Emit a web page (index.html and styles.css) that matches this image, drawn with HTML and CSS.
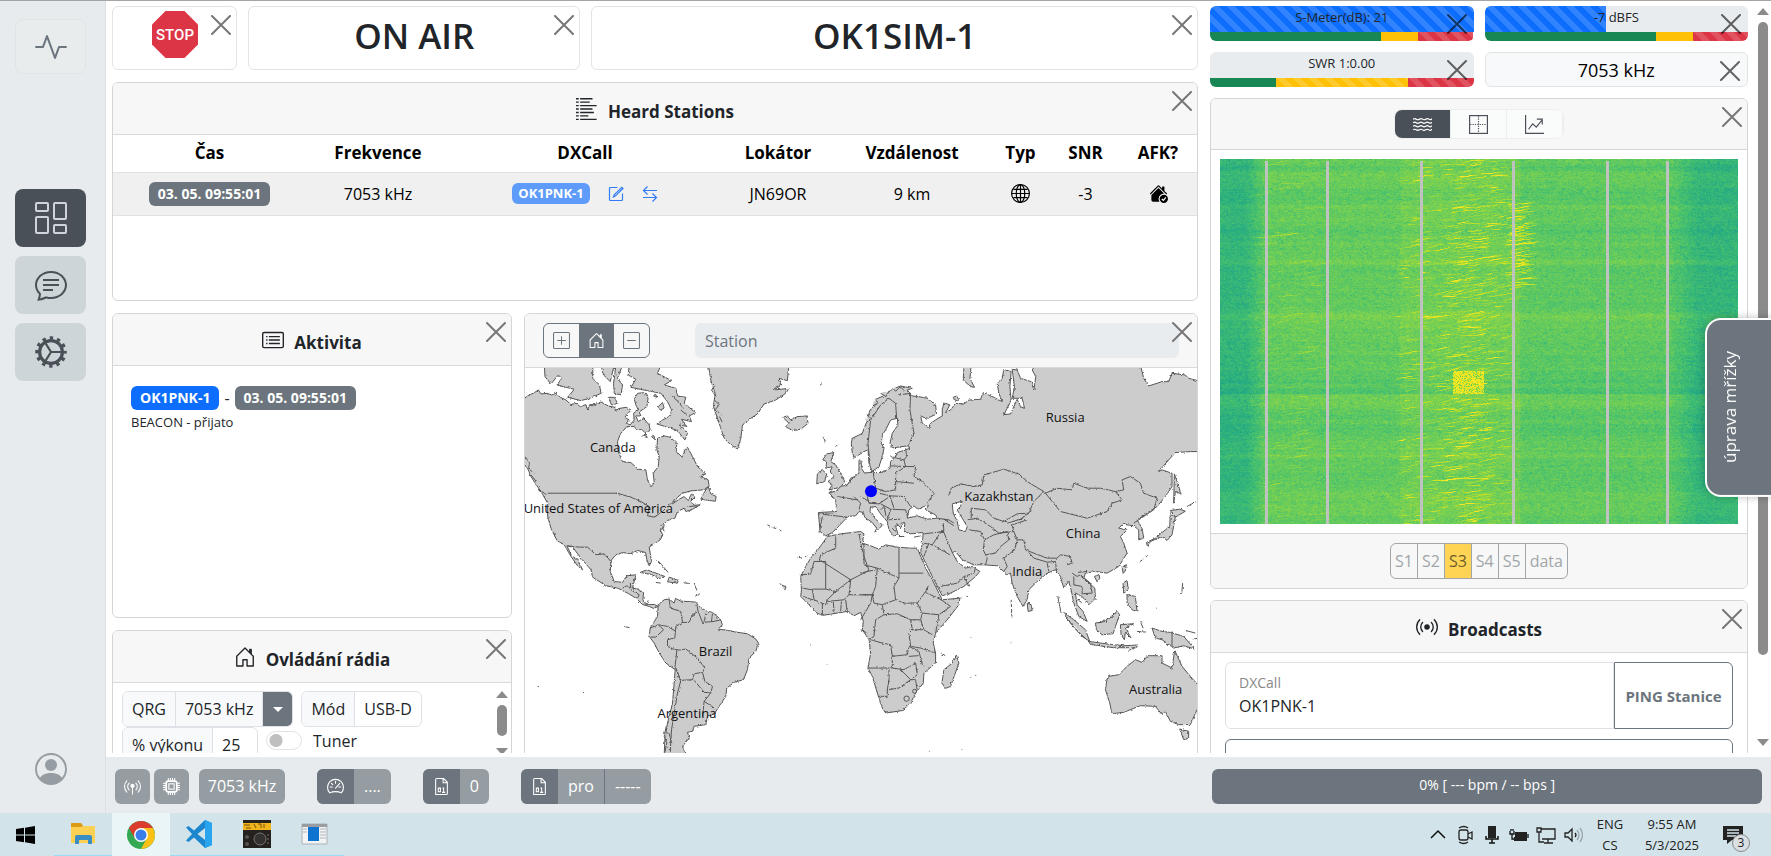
FILE: index.html
```html
<!DOCTYPE html>
<html lang="cs">
  <head>
    <meta charset="UTF-8" />
    <meta name="viewport" content="width=device-width, initial-scale=1.0" />
    <title>FreeDATA</title>
    <link rel="stylesheet" href="styles.css">
  </head>
  <body>
    <!-- icon sprite -->
    <svg class="sprite" aria-hidden="true">
      <symbol id="i-close" viewBox="0 0 20 20"><path d="M1 1l18 18M19 1L1 19" fill="none" stroke="currentColor" stroke-width="2" stroke-linecap="round"/></symbol>
      <symbol id="i-activity" viewBox="0 0 16 16"><path d="M6 2a.5.5 0 0 1 .47.33L10 12.036l1.53-4.208A.5.5 0 0 1 12 7.5h3.5a.5.5 0 0 1 0 1h-3.15l-1.88 5.17a.5.5 0 0 1-.94 0L6 3.964 4.47 8.171A.5.5 0 0 1 4 8.5H.5a.5.5 0 0 1 0-1h3.15l1.88-5.17A.5.5 0 0 1 6 2"/></symbol>
      <symbol id="i-grid" viewBox="0 0 16 16"><path d="M6 1v3H1V1zM1 0a1 1 0 0 0-1 1v3a1 1 0 0 0 1 1h5a1 1 0 0 0 1-1V1a1 1 0 0 0-1-1zm14 12v3h-5v-3zm-5-1a1 1 0 0 0-1 1v3a1 1 0 0 0 1 1h5a1 1 0 0 0 1-1v-3a1 1 0 0 0-1-1zM6 8v7H1V8zM1 7a1 1 0 0 0-1 1v7a1 1 0 0 0 1 1h5a1 1 0 0 0 1-1V8a1 1 0 0 0-1-1zm14-6v7h-5V1zm-5-1a1 1 0 0 0-1 1v7a1 1 0 0 0 1 1h5a1 1 0 0 0 1-1V1a1 1 0 0 0-1-1z"/></symbol>
      <symbol id="i-chat" viewBox="0 0 16 16"><path d="M2.678 11.894a1 1 0 0 1 .287.801 11 11 0 0 1-.398 2c1.395-.323 2.247-.697 2.634-.893a1 1 0 0 1 .71-.074A8 8 0 0 0 8 14c3.996 0 7-2.807 7-6s-3.004-6-7-6-7 2.808-7 6c0 1.468.617 2.83 1.678 3.894m-.493 3.905a22 22 0 0 1-.713.129c-.2.032-.352-.176-.273-.362a10 10 0 0 0 .244-.637l.003-.01c.248-.72.45-1.548.524-2.319C.743 11.37 0 9.76 0 8c0-3.866 3.582-7 8-7s8 3.134 8 7-3.582 7-8 7a9 9 0 0 1-2.347-.306c-.52.263-1.639.742-3.468 1.105"/><path d="M4 5.5h8M4 8h8M4 10.500h5" stroke="currentColor"/></symbol>
      <symbol id="i-gear" viewBox="0 0 16 16"><g fill="none" stroke="currentColor"><circle cx="8" cy="8" r="5.700" stroke-width="1.600"/><circle cx="8" cy="8" r="7" stroke-width="1.700" stroke-dasharray="1.700 1.965" stroke-dashoffset=".85"/><path d="M8 8h5.500M8 8L5 3.200M8 8l-3 4.800" stroke-width="1.100"/></g></symbol>
      <symbol id="i-person" viewBox="0 0 16 16"><path d="M11 6a3 3 0 1 1-6 0 3 3 0 0 1 6 0"/><path fill-rule="evenodd" d="M0 8a8 8 0 1 1 16 0A8 8 0 0 1 0 8m8-7a7 7 0 0 0-5.468 11.37C3.242 11.226 4.805 10 8 10s4.757 1.225 5.468 2.37A7 7 0 0 0 8 1"/></symbol>
      <symbol id="i-house" viewBox="0 0 16 16"><path d="M8.354 1.146a.5.5 0 0 0-.708 0l-6 6A.5.5 0 0 0 1.500 7.500v7a.5.5 0 0 0 .5.5h4.500a.5.5 0 0 0 .5-.5v-4h2v4a.5.5 0 0 0 .5.5H14a.5.5 0 0 0 .5-.5v-7a.5.5 0 0 0-.146-.354L13 5.793V2.500a.5.5 0 0 0-.5-.5h-1a.5.5 0 0 0-.5.5v1.293zM2.500 14V7.707l5.500-5.500 5.500 5.500V14H10v-4a.5.5 0 0 0-.5-.5h-3a.5.5 0 0 0-.5.5v4z"/></symbol>
      <symbol id="i-list" viewBox="0 0 16 16"><path d="M0 .5h2M3 .5h9M0 3h2M3 3h7M0 5.500h2M3 5.500h12M0 8h2M3 8h9M0 10.500h2M3 10.500h10M0 13h2M3 13h6M0 15.500h2M3 15.500h12" fill="none" stroke="currentColor"/></symbol>
      <symbol id="i-card" viewBox="0 0 16 16"><g fill="none" stroke="currentColor"><rect x=".5" y="2.500" width="15" height="11" rx="1"/><path d="M5 5.500h8M5 8h8M5 10.500h8M3 5.500h1M3 8h1M3 10.500h1"/></g></symbol>
      <symbol id="i-broadcast" viewBox="0 0 16 16"><g fill="none" stroke="currentColor" stroke-linecap="round"><path d="M2.700 2.700a7.500 7.500 0 0 0 0 10.600M4.800 4.800a4.500 4.500 0 0 0 0 6.400M11.200 4.800a4.500 4.500 0 0 1 0 6.400M13.300 2.700a7.500 7.500 0 0 1 0 10.600"/></g><circle cx="8" cy="8" r="2"/></symbol>
      <symbol id="i-pin" viewBox="0 0 16 16"><g fill="none" stroke="currentColor" stroke-linecap="round"><path d="M2.700 2.700a7.500 7.500 0 0 0 0 10.600M4.800 4.800a4.500 4.500 0 0 0 0 6.400M11.200 4.800a4.500 4.500 0 0 1 0 6.400M13.300 2.700a7.500 7.500 0 0 1 0 10.600M8 8v7"/></g><circle cx="8" cy="7.500" r="2"/></symbol>
      <symbol id="i-cpu" viewBox="0 0 16 16"><g fill="none" stroke="currentColor"><rect x="3" y="3" width="10" height="10" rx="2" stroke-width="1.600"/><rect x="5.500" y="5.500" width="5" height="5"/><path d="M5 3V0M7 3V0M9 3V0M11 3V0M5 16v-3M7 16v-3M9 16v-3M11 16v-3M0 5h3M0 7h3M0 9h3M0 11h3M13 5h3M13 7h3M13 9h3M13 11h3"/></g></symbol>
      <symbol id="i-speed" viewBox="0 0 16 16"><g fill="none" stroke="currentColor"><path d="M2.600 14a7.500 7.500 0 1 1 10.800 0c-3-1.600-7.800-1.600-10.800 0z"/><path d="M8 3v2M3 8.500h2M11 8.500h2M4.200 5l1.300 1.300M8 9.500l4-4.500" stroke-linecap="round"/></g></symbol>
      <symbol id="i-file" viewBox="0 0 16 16"><path d="M2.500 15.500v-14a1 1 0 0 1 1-1H10L13.500 4v10.500a1 1 0 0 1-1 1zM9.500.5v4h4" fill="none" stroke="currentColor"/><path d="M5 9.500h2v3.500H5zM9 9.500h1v4M8.500 13.500h3" fill="none" stroke="currentColor"/></symbol>
      <symbol id="i-pencil" viewBox="0 0 16 16"><g fill="none" stroke="currentColor" stroke-width="1.200"><path d="M9.500 1.500h-7a1 1 0 0 0-1 1v11a1 1 0 0 0 1 1h11a1 1 0 0 0 1-1v-6"/><path d="M13.800 1.300l1.200 1.200-7.600 7.600-2 .8.800-2z"/></g></symbol>
      <symbol id="i-swap" viewBox="0 0 16 16"><path d="M1 11.500h13.500M10.500 7.500l4 4-4 4M15 4.500H1.500M5.500.5l-4 4 4 4" fill="none" stroke="currentColor" stroke-width="1.200"/></symbol>
      <symbol id="i-globe" viewBox="0 0 16 16"><g fill="none" stroke="currentColor"><circle cx="8" cy="8" r="7.500"/><ellipse cx="8" cy="8" rx="3.600" ry="7.500"/><path d="M8 .5v15M.5 8h15M2 4.500h12M2 11.500h12"/></g></symbol>
      <symbol id="i-home-check" viewBox="0 0 16 16"><path d="M7.300 1.500a1 1 0 0 1 1.400 0L11 3.800V2.500a.5.5 0 0 1 .5-.5h1a.5.5 0 0 1 .5.5v3.300l2.300 2.300-.7.700L8 2.200 1.400 8.800l-.7-.7z"/><path d="M8 3.300l4.700 4.700A4.500 4.500 0 0 0 8.800 15H3.500A1.500 1.500 0 0 1 2 13.500V9.300z"/><circle cx="12.500" cy="12.500" r="3.500"/><path d="M10.800 12.600l1.300 1.200 2.100-2.600" fill="none" stroke="#fff"/></symbol>
      <symbol id="i-water" viewBox="0 0 16 16"><path d="M0 3.500q1.400-1 2.700 0t2.700 0 2.600 0 2.700 0 2.700 0T16 3M0 6.500q1.400-1 2.700 0t2.700 0 2.600 0 2.700 0 2.700 0T16 6M0 9.500q1.400-1 2.700 0t2.700 0 2.600 0 2.700 0 2.700 0T16 9M0 12.500q1.400-1 2.700 0t2.700 0 2.600 0 2.700 0 2.700 0T16 12" fill="none" stroke="currentColor"/></symbol>
      <symbol id="i-scatter" viewBox="0 0 16 16"><g fill="none" stroke="currentColor"><rect x=".5" y=".5" width="15" height="15"/><path d="M8 1v14M1 8h14" stroke-dasharray="1 1"/></g></symbol>
      <symbol id="i-graph" viewBox="0 0 16 16"><path d="M.5 0v15.500H16M3 12l3.500-4.500 3 2.800L14.500 4M10 3.500h4.500V8" fill="none" stroke="currentColor"/></symbol>
      <symbol id="i-plus" viewBox="0 0 16 16"><g fill="none" stroke="currentColor"><rect x=".5" y=".5" width="15" height="15" rx="1"/><path d="M8 4v8M4 8h8"/></g></symbol>
      <symbol id="i-minus" viewBox="0 0 16 16"><g fill="none" stroke="currentColor"><rect x=".5" y=".5" width="15" height="15" rx="1"/><path d="M4 8h8"/></g></symbol>
    </svg>

    <div class="app">
      <nav class="sidebar" aria-label="Menu">
        <button class="nav-btn status" aria-label="Status"><svg><use href="#i-activity"/></svg></button>
        <div class="nav-group">
          <button class="nav-btn active" aria-label="Dashboard"><svg><use href="#i-grid"/></svg></button>
          <button class="nav-btn" aria-label="Chat"><svg><use href="#i-chat"/></svg></button>
          <button class="nav-btn" aria-label="Nastavení"><svg><use href="#i-gear"/></svg></button>
        </div>
        <button class="profile" aria-label="Profil"><svg><use href="#i-person"/></svg></button>
      </nav>

      <main class="main">
        <div class="board">
          <div class="col-left">
            <div class="top-row">
              <section class="card tile">
                <svg class="stop" viewBox="0 0 46 47" role="img" aria-label="STOP"><path d="M13.500 0h19L46 13.500v20L32.500 47h-19L0 33.500v-20z" fill="#dc3545"/><text x="23" y="29" text-anchor="middle">STOP</text></svg>
                <button class="close" aria-label="Zavřít"><svg><use href="#i-close"/></svg></button>
              </section>
              <section class="card tile">
                <h1>ON AIR</h1>
                <button class="close" aria-label="Zavřít"><svg><use href="#i-close"/></svg></button>
              </section>
              <section class="card tile">
                <h1>OK1SIM-1</h1>
                <button class="close" aria-label="Zavřít"><svg><use href="#i-close"/></svg></button>
              </section>
            </div>

            <!-- Heard stations -->
            <section class="card heard">
              <header class="card-header"><svg><use href="#i-list"/></svg><h2>Heard Stations</h2></header>
              <button class="close" aria-label="Zavřít"><svg><use href="#i-close"/></svg></button>
              <table>
                <colgroup><col class="c-time"><col class="c-freq"><col class="c-call"><col class="c-loc"><col class="c-dist"><col class="c-type"><col class="c-snr"><col class="c-afk"></colgroup>
                <thead>
                  <tr><th>Čas</th><th>Frekvence</th><th>DXCall</th><th>Lokátor</th><th>Vzdálenost</th><th>Typ</th><th>SNR</th><th>AFK?</th></tr>
                </thead>
                <tbody>
                  <tr>
                    <td><span class="badge">03. 05. 09:55:01</span></td>
                    <td>7053 kHz</td>
                    <td>
                      <div class="call-cell">
                        <span class="badge call">OK1PNK-1</span>
                        <button class="icon-btn" aria-label="Nová zpráva"><svg><use href="#i-pencil"/></svg></button>
                        <button class="icon-btn" aria-label="Ping"><svg><use href="#i-swap"/></svg></button>
                      </div>
                    </td>
                    <td>JN69OR</td>
                    <td>9 km</td>
                    <td><svg class="cell-icon"><use href="#i-globe"/></svg></td>
                    <td>-3</td>
                    <td><svg class="cell-icon"><use href="#i-home-check"/></svg></td>
                  </tr>
                </tbody>
              </table>
            </section>

            <div class="lower">
              <div class="stack">
                <section class="card activity">
                  <header class="card-header"><svg><use href="#i-card"/></svg><h2>Aktivita</h2></header>
                  <button class="close" aria-label="Zavřít"><svg><use href="#i-close"/></svg></button>
                  <div class="activity-body">
                    <p class="activity-line"><span class="badge blue">OK1PNK-1</span>-<span class="badge">03. 05. 09:55:01</span></p>
                    <p class="activity-note">BEACON - přijato</p>
                  </div>
                </section>

                <!-- Radio control -->
                <section class="card radio">
                  <header class="card-header"><svg><use href="#i-house"/></svg><h2>Ovládání rádia</h2></header>
                  <button class="close" aria-label="Zavřít"><svg><use href="#i-close"/></svg></button>
                  <div class="radio-body">
                    <div class="radio-fields">
                      <div class="field-row">
                        <div class="field"><span class="cell shade">QRG</span><span class="cell shade">7053 kHz</span><button class="drop" aria-label="Vybrat frekvenci"></button></div>
                        <div class="field"><span class="cell shade">Mód</span><span class="cell">USB-D</span></div>
                      </div>
                      <div class="field-row">
                        <div class="field"><label class="cell shade" for="power">% výkonu</label><input id="power" type="text" value="25"></div>
                        <label class="switch"><input type="checkbox"><span>Tuner</span></label>
                      </div>
                    </div>
                    <div class="scroll inner"><i class="up"></i><i class="thumb"></i><i class="down"></i></div>
                  </div>
                </section>
              </div>

              <!-- Map -->
              <section class="card map">
                <header class="map-header">
                  <div class="zoom-group">
                    <button aria-label="Přiblížit"><svg><use href="#i-plus"/></svg></button><button class="on" aria-label="Výchozí"><svg><use href="#i-house"/></svg></button><button aria-label="Oddálit"><svg><use href="#i-minus"/></svg></button>
                  </div>
                  <input type="text" placeholder="Station" aria-label="Station">
                </header>
                <button class="close" aria-label="Zavřít"><svg><use href="#i-close"/></svg></button>
                <svg class="world" viewBox="12 174 2018 1260">
                  <filter id="coast" x="0" y="0" width="1" height="1"><feTurbulence type="fractalNoise" baseFrequency="0.12" numOctaves="3" seed="4"/><feDisplacementMap in="SourceGraphic" scale="8" xChannelSelector="R" yChannelSelector="G"/></filter>
                  <g class="land" filter="url(#coast)">
                    <rect x="-60" y="100" width="2200" height="1400" fill="none" stroke="none"/>
                    <!-- Americas -->
                    <path d="M0 272L20 258 40 248 52 240 60 252 78 250 92 255 105 250 118 262 135 270 150 284 165 280 178 290 195 284 200 300 206 284 222 284 240 276 262 288 282 292 284 306 292 296 316 292 330 300 312 322 325 330 316 340 328 345 340 330 338 310 352 300 345 285 340 268 350 250 372 248 382 262 378 290 355 306 360 318 345 318 352 335 368 325 385 345 388 362 372 368 362 358 350 362 340 350 318 350 298 372 290 395 292 425 305 455 330 458 352 478 375 480 380 512 392 530 400 518 397 490 412 470 415 440 408 420 410 385 432 378 448 382 468 400 466 425 485 442 492 420 500 412 515 440 530 470 555 492 540 500 562 510 565 530 545 540 510 543 485 550 470 562 455 582 475 568 490 560 502 572 512 552 522 562 510 574 520 586 538 585 515 598 495 605 490 595 470 605 462 625 440 632 430 642 428 655 418 660 426 675 418 690 400 702 385 712 388 730 392 755 385 768 378 750 374 728 350 722 330 732 305 728 285 735 270 752 268 785 280 815 305 818 318 798 345 795 340 815 335 835 350 838 368 848 366 870 375 885 400 884 412 890 398 896 385 890 365 884 345 865 320 850 290 835 255 828 215 802 210 780 180 745 155 712 138 708 152 738 170 750 185 780 170 768 150 740 130 705 108 692 90 655 80 620 80 580 60 545 48 528 30 500 22 480 0 450z"/>
                    <path d="M412 885L430 870 445 868 460 880 464 866 480 874 525 877 535 890 555 903 575 908 598 928 605 945 592 958 620 962 645 967 680 972 705 988 713 1000 705 1025 685 1045 680 1080 668 1110 640 1118 618 1135 615 1160 595 1190 582 1210 560 1220 555 1245 520 1250 515 1265 500 1268 505 1285 485 1310 495 1340 500 1450 425 1450 432 1290 440 1240 455 1180 460 1120 463 1080 435 1060 415 1030 400 1000 385 980 388 955 410 920z"/>
                    <path d="M70 165L72 200 90 222 112 195 122 205 108 225 160 238 140 262 180 272 215 262 240 250 236 225 215 205 216 165z"/>
                    <path d="M240 165L248 195 268 215 280 165zM285 165L278 220 280 250 300 255 305 225 290 205 305 165zM262 262L272 285 290 280 280 262z"/>
                    <path d="M325 165L322 195 345 208 330 232 358 238 395 245 420 250 440 275 452 300 448 318 425 330 408 342 440 352 470 362 492 390 500 370 475 345 498 350 482 328 512 335 505 318 524 308 490 280 495 262 470 258 465 235 430 225 452 212 410 190 420 165z"/>
                    <path d="M398 258L404 252 408 262zM412 290L425 278 430 295 418 300zM365 378l10-5 4 10zM392 380l6-4 6 14zM540 568L552 545 562 530 570 552 586 560 584 574 566 572z"/>
                    <path d="M358 788L378 780 405 790 432 800 415 806 392 794zM440 816L445 802 472 812 470 820zM405 818l14 2M488 819l16 2M410 752l12 12 8 10 12 14M520 822l8 20M500 590l30-2M522 860l14-6"/>
                    <path d="M562 160L570 210 583 250 578 290 595 340 610 385 630 405 650 417 660 385 665 345 690 325 710 312 730 282 765 270 795 250 805 235 760 240 782 225 775 205 800 212 805 160z"/>
                    <path d="M786 322L800 318 810 330 830 320 858 318 862 340 840 358 815 362 795 350 805 340z"/>
                    <path d="M568 215l14 12-10 14 14 18M580 270l16 14-12 14 18 18M596 320l8 16M12 440l14 20-4 16 18 14M30 495l16 20M56 540l20 14M450 255l20 18 16 20M480 300l18 16M764 232l20-10M420 645l10 20M436 1250l-6 30 8 20-6 28M444 1270l8 30"/>
                    <path d="M895 228l8-6M906 382l8 6-2 10M945 410l6-6M740 645l8 4M756 653l10 3M776 660l6 3M830 742l14 3M850 744l10-8M780 825l16 6-4 10M310 950l16 4M50 1128l4 0M186 1148l3 1M868 1005l2 1M918 1063l2 1"/>
                    <!-- British Isles -->
                    <path d="M918 432L940 428 930 455 945 465 965 500 972 515 960 532 925 540 935 525 922 515 940 500 928 485 935 470 915 475 918 455 906 450zM890 492L905 480 918 492 912 515 888 522z"/>
                  </g>
                  <g class="land" filter="url(#coast)" transform="translate(1020 0)">
                    <rect x="-1080" y="100" width="2200" height="1400" fill="none" stroke="none"/>
                    <!-- Eurasia -->
                    <path d="M-127 608L-122 665-105 678-85 668-65 648-48 630-40 620-15 618-5 605 8 608 12 622 35 638 48 655 42 668 60 652 65 645 45 628 28 605 30 592 45 590 60 612 80 635 85 660 100 680 112 672 105 650 125 640 133 638 130 665 150 672 188 668 185 700 180 728 205 780 225 820 245 858 270 850 310 830 345 800 358 785 335 770 315 775 290 755 275 728 285 725 305 750 340 765 370 765 410 768 430 785 440 795 450 790 455 820 470 860 487 890 500 870 505 840 530 815 560 790 585 780 600 800 610 835 625 815 632 840 640 880 655 920 680 935 668 905 650 885 645 850 665 860 685 885 705 865 703 835 670 805 675 790 705 785 740 790 775 770 800 730 790 700 780 680 800 660 775 655 790 640 800 645 820 648 835 660 835 690 850 685 845 655 830 630 860 610 890 590 915 560 935 530 935 490 905 480 895 485 925 450 945 428 990 425 1050 425 1050 222 985 205 975 195 935 190 925 215 905 215 865 228 850 205 840 165 525 165 515 180 526 200 520 240 512 215 480 205 470 180 455 178 462 230 455 265 485 265 492 295 480 290 470 268 450 312 430 314 440 295 452 270 448 230 452 185 430 178 425 205 410 220 415 250 425 275 400 262 368 248 360 268 325 270 310 282 285 280 270 300 255 308 268 285 250 278 245 300 245 318 225 330 210 340 205 355 185 340 180 318 200 325 228 312 225 285 200 265 175 260 155 258 140 240 155 235 120 228 95 238 75 255 40 270 50 280 28 300 20 330 5 370-25 385-28 400-25 430-18 443 10 425 22 420 25 460 35 486 12 490 5 480 0 450-5 455-5 490-18 500-30 505-40 525-60 530-75 545-95 548-75 572-72 605z"/>
                    <!-- Africa -->
                    <path d="M-100 680L-60 672 0 665 10 672 5 700 30 708 55 718 75 705 110 712 150 715 170 715 195 775 215 810 235 850 245 870 298 865 295 885 260 930 225 970 218 1000 225 1030 225 1060 190 1090 188 1120 165 1150 150 1180 125 1203 75 1210 65 1195 50 1150 35 1100 22 1075 30 1030 25 990 5 960 8 935 0 908-20 918-40 905-70 910-115 917-135 908-155 885-180 860-178 840-180 800-165 770-150 745-125 715z"/>
                    <path d="M288 1038L295 1060 270 1130 255 1136 244 1120 250 1080 275 1060zM310 173L308 210 330 230 342 232 328 205 332 165 320 165zM278 262l10-4 6 10-10 6z"/>
                    <path d="M40 268l14 10-18 10M60 250l16 10 10-18M95 232l10 12 14-14 12 12M20 310l10 16-14 14M95 655l10 12M108 640l12 14 8-12M115 680h16M160 682l20-4"/>
                    <!-- Asian islands -->
                    <path d="M500 880L512 885 515 902 503 905zM785 770L798 765 794 785 788 790zM702 800l14-6 2 12-8 10zM788 820L800 812 804 840 790 850zM800 855L825 860 830 905 815 900 800 880z"/>
                    <path d="M930 615L945 620 935 675 920 692 905 680 870 695 862 712 858 698 885 685 915 660 928 650zM930 602L958 598 975 604 945 622zM942 492L952 520 962 552 945 545 940 580z"/>
                    <path d="M610 908L640 930 675 960 688 995 665 980 630 940zM685 995L720 1000 760 1005 790 1008 830 1006 826 1014 760 1014 690 1004zM705 940L735 935 770 905 778 915 765 950 758 972 725 975 708 960zM780 945L820 942 795 955 812 985 795 968 792 990 782 975zM875 955L905 965 930 968 970 980 1003 1018 970 1008 940 1015 905 990 885 985zM830 965l25 2M840 935l8 20M805 1022l28-12M650 870l14 8M592 860l4 20 6 30M615 918l30 40 30 28M975 962l30 8M1000 988l10-2M964 850l3-28"/>
                    <!-- Oceania -->
                    <path d="M740 1108L745 1100 775 1095 800 1070 825 1050 845 1058 862 1038 905 1038 905 1060 935 1075 943 1022 965 1070 990 1100 1012 1125 1050 1150 1050 1190 1010 1200 990 1245 955 1245 930 1235 915 1205 905 1215 885 1190 840 1188 790 1208 755 1212 748 1180 735 1140zM958 1258L985 1265 985 1285 970 1290z"/>
                    <path d="M318 860h4M242 1030l12 8M328 1102l4 0M344 1097l3 0M452 870l2 50M450 1000h2M838 756l8-6M856 742l6-6M980 590l26-14M888 895l2 1M330 983l2 0M205 1325l2 0M303 1320l2 0"/>
                  </g>
                  <!-- inland seas -->
                  <g class="sea" filter="url(#coast)" transform="translate(1020 0)">
                    <rect x="-1080" y="100" width="2200" height="1400" fill="none" stroke="none"/>
                    <path d="M62 400L65 375 75 360 90 330 110 325 112 345 95 370 88 400 95 414 140 408 148 415 110 428 105 440 90 455 88 475 60 488 30 488 55 470 65 440 70 415z"/>
                    <path d="M140 625L145 600 160 588 172 598 190 590 205 585 195 600 225 615 230 625 200 628 170 618zM275 582L305 574 300 590 290 600 305 625 320 650 315 665 295 660 290 635 278 610z"/>
                  </g>
                  <!-- country borders -->
                  <g class="borders">
                    <path d="M80 550H288"/>
                    <g filter="url(#coast)">
                      <rect x="-60" y="100" width="2200" height="1400" fill="none" stroke="none"/>
                      <path d="M288 550L330 562 360 575 385 590 380 618 400 622 425 605 440 590 462 570M140 708L175 712 200 712 225 735 250 732 270 755M305 835L318 828 330 835 328 820M330 840L355 855 350 865M378 880L382 872"/>
                      <path d="M445 870L448 895 480 905 485 938 465 950 462 985 440 990 440 1010 468 1022 462 1075M485 938L505 938 515 915 532 905 528 885M532 905L545 938 580 935 600 930M555 912L550 935M575 912L572 935M388 955L412 945 428 960 405 982 390 982M412 945L440 950 465 965M468 1022L495 1018 530 1045 552 1075 545 1088 520 1092 515 1110 480 1112 465 1075M545 1088L552 1115 575 1130 570 1150 550 1148 520 1112M570 1150L550 1175 580 1195M550 1175L545 1220M480 1112L470 1150 462 1200 452 1260 448 1330M465 1075L478 1112"/>
                      <path d="M905 620L895 668M893 612L980 622M1000 500L975 530M1000 560L1020 580 1015 600M950 560L1010 570"/>
                      <path d="M945 680L945 715 900 735 895 755M840 795L870 793 880 755M1045 782L1030 740 1020 700 1015 670M915 838L945 845 920 870 915 885 880 870 875 840 845 835M945 845L990 810 985 855 970 870 920 875M985 855H1060M980 910L975 870M905 915L905 880M940 910L938 875M960 905L962 875M848 860L875 870"/>
                    </g>
                    <path d="M880 755H915V838H875M900 752L990 810 1045 782"/>
                  </g>
                  <g class="borders" transform="translate(1020 0)">
                    <g filter="url(#coast)">
                      <rect x="-1080" y="100" width="2200" height="1400" fill="none" stroke="none"/>
                      <path d="M28 460L22 400 30 330 60 285 85 265 105 280 108 325M115 255L150 250 148 300 160 370 142 408M135 415L138 440 130 450 135 470 165 470 160 500 185 515 220 550 200 580M90 440L130 450M90 468L135 470 105 490 105 515 160 520M38 490L45 535 75 545 105 540 105 515M45 535L20 560 25 580 55 582 90 558 130 560 150 590M55 550L90 558M60 582L90 598 135 600 140 620M90 598L80 630 120 628M88 558L100 595M0 560L25 575M60 600L70 590 76 618M230 625L265 630 280 640M248 640L250 665 190 672M250 628L280 648M190 700L215 705 240 668 250 668 275 728M215 705L268 735M190 740L205 700M240 830L290 820 310 800 340 790 345 775M310 800L325 830"/>
                      <path d="M265 555L272 535 300 522 340 530 365 525 370 495 430 478 475 492 500 515 550 545 520 575 505 610 470 612 430 635 400 625 375 600 332 595 332 625M320 630L350 625 390 650 415 670 460 665 470 690 490 690 495 720 520 730 560 745 590 745 600 735 630 740 635 760 620 765M325 660L360 665 372 690 368 720 380 745 375 765M372 690L400 675 440 665 445 690 420 710 405 730 375 735M470 690L462 720 430 745 440 770 430 785M505 610L480 628 440 640M460 665L455 645 500 630M505 728L520 745 560 757 585 755 588 785M560 760L565 785M555 550L590 535 635 540 640 520 680 535 720 535 765 545 785 570 755 580 740 605 680 625 600 605 575 575 555 550M765 545L790 540 785 510 810 500 840 520 850 550 890 565 880 600 865 610 820 640M635 790L650 800 660 795 690 820 695 850 665 852 665 830 640 825 640 800M650 788L680 785"/>
                      <path d="M115 805L50 775 10 765 10 700M50 775L45 830 35 855 40 880 65 885 105 870 100 830 115 805M45 780L20 785 0 790M0 855H35L30 880 0 930M65 885L70 915 45 930 40 980 25 990M70 915L110 912 150 930 155 960 145 970 150 1010 180 1015M105 870L130 880 170 880 185 910 180 930 150 930M170 880L195 845 205 825M185 910L235 915 270 890 242 870 195 848M235 915L225 970M180 930L190 960 215 975M150 960H190M30 990L65 1000 90 1005 95 1040 140 1035 145 1010 175 1025 185 1065 190 1070M95 1040V1075L22 1075M95 1075L130 1080 165 1060 170 1095 150 1110 120 1080M85 1080V1110L80 1140V1160L55 1160M85 1140L115 1135 150 1110 165 1110 170 1145M180 1015L225 1030M145 1040L172 1038M0 960L20 970M715 940L735 930 760 920"/>
                    </g>
                    <path d="M115 715V790H188M115 790V805M935 965V1012"/>
                    <circle cx="138" cy="1167" r="8"/><circle cx="162" cy="1145" r="6"/>
                  </g>
                  <circle cx="1051" cy="544" r="18" fill="#0000ff"/>
                  <g class="names">
                    <text x="207" y="425">Canada</text>
                    <text x="8" y="610">United States of America</text>
                    <text x="534" y="1040">Brazil</text>
                    <text x="410" y="1226">Argentina</text>
                    <text x="1576" y="336">Russia</text>
                    <text x="1331" y="572">Kazakhstan</text>
                    <text x="1636" y="685">China</text>
                    <text x="1475" y="798">India</text>
                    <text x="1826" y="1154">Australia</text>
                  </g>
                </svg>
              </section>
            </div>
          </div>

          <div class="col-right">
            <div class="meters">
              <div class="meter">
                <div class="meter-top"><div class="fill striped" style="width: 100%"></div><span>S-Meter(dB): 21</span></div>
                <div class="scale"><i class="green" style="width: 65%"></i><i class="yellow" style="width: 14%"></i><i class="red striped" style="width: 21%"></i></div>
                <button class="close" aria-label="Zavřít"><svg><use href="#i-close"/></svg></button>
              </div>
              <div class="meter">
                <div class="meter-top"><div class="fill striped" style="width: 46%"></div><span>-7 dBFS</span></div>
                <div class="scale"><i class="green" style="width: 65%"></i><i class="yellow" style="width: 14%"></i><i class="red striped" style="width: 21%"></i></div>
                <button class="close" aria-label="Zavřít"><svg><use href="#i-close"/></svg></button>
              </div>
              <div class="meter">
                <div class="meter-top"><span>SWR 1:0.00</span></div>
                <div class="scale"><i class="green" style="width: 25%"></i><i class="yellow striped" style="width: 50%"></i><i class="red striped" style="width: 25%"></i></div>
                <button class="close" aria-label="Zavřít"><svg><use href="#i-close"/></svg></button>
              </div>
              <div class="meter freq">7053 kHz
                <button class="close" aria-label="Zavřít"><svg><use href="#i-close"/></svg></button>
              </div>
            </div>

            <!-- Waterfall -->
            <section class="card">
              <header class="fall-header">
                <div class="tabs">
                  <button class="on" aria-label="Vodopád"><svg><use href="#i-water"/></svg></button><button aria-label="Scatter"><svg><use href="#i-scatter"/></svg></button><button aria-label="Graf"><svg><use href="#i-graph"/></svg></button>
                </div>
              </header>
              <button class="close" aria-label="Zavřít"><svg><use href="#i-close"/></svg></button>
              <div class="fall-body"><canvas id="waterfall" width="518" height="365"></canvas></div>
              <footer class="fall-footer">
                <div class="slots"><button>S1</button><button>S2</button><button class="on">S3</button><button>S4</button><button>S5</button><button>data</button></div>
              </footer>
            </section>

            <!-- Broadcasts -->
            <section class="card broadcasts">
              <header class="card-header"><svg><use href="#i-broadcast"/></svg><h2>Broadcasts</h2></header>
              <button class="close" aria-label="Zavřít"><svg><use href="#i-close"/></svg></button>
              <div class="cast-body">
                <div class="ping">
                  <div class="ping-field"><label for="dxcall">DXCall</label><input id="dxcall" type="text" value="OK1PNK-1"></div>
                  <button>PING Stanice</button>
                </div>
                <button class="cq" aria-label="CQ"></button>
              </div>
            </section>
          </div>
        </div>
        <div class="scroll"><i class="up"></i><i class="thumb"></i><i class="down"></i></div>
      </main>

      <footer class="bottom">
        <div class="chips">
          <div class="pair"><button class="chip" aria-label="Modem"><svg><use href="#i-pin"/></svg></button><button class="chip" aria-label="CPU"><svg><use href="#i-cpu"/></svg></button></div>
          <button class="chip wide">7053 kHz</button>
          <div class="chip-group"><span class="dark"><svg><use href="#i-speed"/></svg></span><span>....</span></div>
          <div class="chip-group"><span class="dark"><svg><use href="#i-file"/></svg></span><span>0</span></div>
          <div class="chip-group"><span class="dark"><svg><use href="#i-file"/></svg></span><span>pro</span><span class="sep">-----</span></div>
        </div>
        <div class="progress">0% [ --- bpm / -- bps ]</div>
      </footer>
    </div>

    <button class="grid-tab">úprava mřížky</button>

    <!-- taskbar -->
    <div class="taskbar">
      <div class="apps">
        <button aria-label="Start"><svg viewBox="0 0 28 28"><path d="M3 8l8-1.200v6.700H3zM12 6.700L22 5v8.500H12zM3 14.500h8v6.700L3 20zM12 14.500h10V23l-10-1.700z"/></svg></button>
        <button class="run" aria-label="Průzkumník"><svg viewBox="0 0 28 28"><path d="M2 3h10l2 3h11a1 1 0 0 1 1 1v16H2z" fill="#fbd053"/><path d="M2 4a1 1 0 0 1 1-1h9l2 3-2 1H2z" fill="#d99a16"/><path d="M6 24v-7a2 2 0 0 1 2-2h13a2 2 0 0 1 2 2v7h-4v-4h-9v4z" fill="#3b8ec4"/></svg></button>
        <button class="current" aria-label="Chrome"><svg viewBox="0 0 28 28"><circle cx="14" cy="14" r="14" fill="#34a853"/><path d="M14 14l12.100-7A14 14 0 0 1 14 28l6-11z" fill="#fbc116"/><path d="M14 7h12.100L20 17z" fill="#fbc116"/><path d="M1.900 7A14 14 0 0 1 26.100 7H14L8 17.500z" fill="#db3c2e"/><circle cx="14" cy="14" r="7" fill="#fff"/><circle cx="14" cy="14" r="5.500" fill="#3b7de8"/></svg></button>
        <button class="run" aria-label="VS Code"><svg viewBox="0 0 28 28"><path d="M20 0l7 3v22l-7 3L9 17.500 3.500 22 1 20.500 7 14 1 7.500 3.500 6 9 10.500z" fill="#1c87cf"/><path d="M20 0l7 3v22l-7 3z" fill="#29a5ef"/><path d="M20 8v12l-7.500-6z" fill="#d2e4ea"/></svg></button>
        <button class="run" aria-label="Rádio"><svg viewBox="0 0 28 28"><path d="M0 0h28v28H0z" fill="#24211f"/><path d="M0 3h28v7H0z" fill="#f0b51c"/><path d="M1 5h6M11 4l2 4M15 4h3v4M21 4v4M3 8h5" stroke="#7c4d10" fill="none"/><circle cx="17" cy="19" r="6" fill="#343231" stroke="#77716c"/><circle cx="4" cy="17" r="2" fill="#57524e"/><circle cx="4" cy="24" r="2" fill="#57524e"/><path d="M25 14v10" stroke="#77716c" stroke-dasharray="2 2"/></svg></button>
        <button class="run" aria-label="Aplikace"><svg viewBox="0 0 28 28"><path d="M1 4h25v20H1z" fill="#f2f3f4" stroke="#aab0b4"/><path d="M1 4h25v3H1z" fill="#979da1"/><path d="M7 7h11v14H7z" fill="#0f74d0"/><path d="M19 9h6M19 12h6M19 15h6M19 18h6M2 9h4M2 12h4" stroke="#b1b5b8" fill="none"/></svg></button>
      </div>
      <div class="tray">
        <svg viewBox="0 0 20 20"><path d="M3 13l7-7 7 7" fill="none" stroke="#111" stroke-width="1.500"/></svg>
        <svg viewBox="0 0 20 20"><g fill="none" stroke="#222" stroke-width="1.300"><rect x="4" y="5" width="9" height="10" rx="2"/><path d="M13 9l4-2v7l-4-2M4 3q5-3 9 0M4 17q5 3 9 0"/></g></svg>
        <svg viewBox="0 0 20 20"><path d="M6 1h8v12H6z"/><path d="M4 11v3h12v-3M10 14v4M7 18h6" fill="none" stroke="#111" stroke-width="1.500"/></svg>
        <svg viewBox="0 0 20 20"><path d="M6 7h12v9H5v-4h1z"/><path d="M1 6v3h4V6M3 9v5h2M2 4v2M4 4v2M19 9v4" fill="none" stroke="#111" stroke-width="1.300"/></svg>
        <svg viewBox="0 0 20 20"><path d="M5 4h14v10H6M12 14v4M8 18h9M1 3h4v4H1zM3 7v10h5" fill="none" stroke="#222" stroke-width="1.300"/></svg>
        <svg viewBox="0 0 20 20"><g fill="none" stroke="#222" stroke-width="1.300"><path d="M2 8h3l4-4v12l-4-4H2zM12 8q2 2 0 4"/><path d="M14 5q4 5 0 10M17 3q5 7 0 14" stroke="#98a5aa"/></g></svg>
        <div class="stamp lang">ENG<br>CS</div>
        <div class="stamp">9:55 AM<br>5/3/2025</div>
        <div class="notes"><svg viewBox="0 0 20 20"><path d="M0 1h20v14H9l-5 4v-4H0z"/><path d="M4 5h12M4 8h12M4 11h9" stroke="#d2e4ea" stroke-width="1.500"/></svg><span>3</span></div>
      </div>
    </div>

    <script src="waterfall.js"></script>
  </body>
</html>
```
FILE: styles.css
```css
* {
  box-sizing: border-box;
}

body {
  margin: 0;
  height: 100vh;
  display: flex;
  flex-direction: column;
  overflow: hidden;
  font-family: "Open Sans", "Noto Sans", sans-serif;
  font-size: 16px;
  line-height: 24px;
  color: #212529;
  background: #fff;
}

button, input {
  font: inherit;
  color: inherit;
  margin: 0;
  padding: 0;
  border: none;
  background: none;
}

h1, h2, p {
  margin: 0;
}

svg {
  fill: currentColor;
  flex: none;
}

.sprite {
  display: none;
}

.app {
  flex: 1;
  min-height: 0;
  display: grid;
  grid-template-columns: 106px minmax(0, 1fr);
  grid-template-rows: minmax(0, 1fr) 56px;
  border-top: 1px solid #a5a5a5;
}

/* sidebar */
.sidebar {
  grid-row: 1 / 3;
  display: flex;
  flex-direction: column;
  align-items: center;
  padding: 18px 19px 28px 15px;
  background: #e7ebed;
  border-right: 1px solid #dcdfe1;
}

.nav-group {
  display: flex;
  flex-direction: column;
  gap: 9px;
  margin-top: 115px;
  width: 100%;
}

.nav-btn {
  display: flex;
  align-items: center;
  justify-content: center;
  width: 100%;
  height: 58px;
  border-radius: 8px;
  background: #ced5d9;
  color: #495057;
}

.nav-btn svg, .profile svg {
  width: 32px;
  height: 32px;
}

.nav-btn.status {
  height: 55px;
  background: #e8eced;
  border: 1px solid #dfe5e7;
  color: #6c757d;
}

.nav-btn.active {
  background: #495057;
  color: #ced4da;
}

.profile {
  margin-top: auto;
  height: 32px;
  color: #959da3;
}

/* board */
.main {
  display: flex;
  overflow: hidden;
  border-bottom: 4px solid #fff;
}

.board {
  flex: 1;
  display: grid;
  grid-template-columns: minmax(0, 1086fr) minmax(0, 538fr);
  gap: 12px;
  padding: 5px 7px 0 6px;
  align-items: start;
}

.col-left, .col-right {
  display: flex;
  flex-direction: column;
  gap: 12px;
}

.col-right {
  gap: 11px;
}

.card {
  position: relative;
  border: 1px solid #d3d5d6;
  border-radius: 6px;
  background: #fff;
  overflow: hidden;
}

.close {
  position: absolute;
  top: 8px;
  right: 5px;
  width: 20px;
  height: 20px;
  color: #777;
}

.close svg {
  display: block;
  width: 20px;
  height: 20px;
}

.card-header {
  display: flex;
  align-items: center;
  justify-content: center;
  gap: 10px;
  height: 52px;
  padding-top: 6px;
  background: #f7f7f7;
  border-bottom: 1px solid #d9dadb;
}

.card-header svg {
  width: 22px;
  height: 22px;
  margin-bottom: 6px;
}

.card-header h2 {
  font-size: 17px;
  font-weight: 700;
}

.top-row {
  display: grid;
  grid-template-columns: 125fr 332fr 606fr;
  gap: 11px;
}

.tile {
  display: flex;
  justify-content: center;
  height: 64px;
  padding-top: 4px;
  border-color: #e1e4e5;
}

.tile h1 {
  font-size: 35px;
  line-height: 50px;
  font-weight: 600;
}

.stop {
  width: 46px;
  height: 47px;
}

.stop text {
  font: 500 15px Roboto, sans-serif;
  fill: #fff;
}

/* heard stations */
.heard {
  height: 219px;
}

table {
  width: 100%;
  table-layout: fixed;
  border-collapse: collapse;
  text-align: center;
  color: #000;
}

.c-time { width: 193px; }
.c-freq { width: 144px; }
.c-call { width: 270px; }
.c-loc { width: 116px; }
.c-dist { width: 152px; }
.c-type { width: 65px; }
.c-snr { width: 65px; }
.c-afk { width: 80px; }

th {
  height: 37px;
  padding: 0;
  font-size: 17px;
  font-weight: 700;
}

td {
  height: 43px;
  padding: 0;
  background: #f0f0f0;
  border: solid #dee2e6;
  border-width: 1px 0;
}

.badge {
  display: inline-block;
  padding: 0 9px;
  border-radius: 6px;
  background: #6c757d;
  color: #fff;
  font-size: 14px;
  font-weight: 700;
}

.badge.call {
  padding: 0 6px;
  background: #5e9bfa;
  font-size: 13px;
  line-height: 21px;
}

.badge.blue {
  background: #0d6efd;
}

.call-cell {
  display: flex;
  align-items: center;
  justify-content: center;
  gap: 18px;
}

.icon-btn {
  color: #2f7cf6;
  height: 16px;
}

.icon-btn svg {
  display: block;
  width: 16px;
  height: 16px;
}

.cell-icon {
  display: block;
  margin: 0 auto;
  width: 19px;
  height: 19px;
}

.lower {
  display: grid;
  grid-template-columns: minmax(0, 400fr) minmax(0, 674fr);
  gap: 12px;
}

.stack {
  display: flex;
  flex-direction: column;
  gap: 12px;
}

/* activity */
.activity {
  height: 305px;
}

.activity-body {
  padding: 20px 18px;
}

.activity-line {
  display: flex;
  gap: 5px;
}

.activity-note {
  font-size: 13px;
}

/* radio control */
.radio-body {
  display: flex;
  height: 80px;
  padding: 8px 3px 0 9px;
}

.radio-fields {
  flex: 1;
}

.field-row {
  display: flex;
  gap: 8px;
}

.field {
  display: flex;
  height: 36px;
  line-height: 34px;
  border: 1px solid #dee2e6;
  border-radius: 6px;
  overflow: hidden;
}

.cell {
  padding: 0 9px;
  border-right: 1px solid #dee2e6;
}

.cell:last-child {
  border-right: none;
}

.shade {
  background: #f8f9fa;
}

.drop {
  display: flex;
  align-items: center;
  justify-content: center;
  width: 29px;
  background: #6c757d;
}

.drop::after {
  content: "";
  border: 5px solid transparent;
  border-top-color: #fff;
  border-bottom: none;
}

.field input {
  width: 44px;
  padding: 0 9px;
}

.switch {
  display: flex;
  gap: 11px;
  padding-top: 4px;
}

.switch input {
  appearance: none;
  width: 36px;
  height: 19px;
  border: 1px solid #dee2e6;
  border-radius: 10px;
  background: radial-gradient(circle at 9px 50%, #bfbfbf 6px, #fff 7px);
}

.switch span {
  line-height: 21px;
}

/* scrollbars */
.scroll {
  width: 16px;
  display: flex;
  flex-direction: column;
  align-items: center;
  padding-top: 7px;
}

.scroll .up, .scroll .down {
  border: 6px solid transparent;
  border-top: none;
  border-bottom: 7px solid #8b8b8b;
}

.scroll .down {
  border-top: 7px solid #8b8b8b;
  border-bottom: none;
  margin-top: auto;
  margin-bottom: 7px;
}

.scroll .thumb {
  width: 10px;
  height: 85%;
  margin-top: 7px;
  border-radius: 5px;
  background: #8b8b8b;
}

.scroll.inner {
  width: 12px;
  padding-top: 0;
}

.scroll.inner .thumb {
  height: 31px;
}

.scroll.inner .down {
  margin: 12px 0 0;
}

/* map */
.map-header {
  display: flex;
  gap: 45px;
  height: 54px;
  padding: 9px 18px;
  background: #f7f7f7;
  border-bottom: 1px solid #d9dadb;
}

.zoom-group, .slots, .tabs {
  display: flex;
  border: 1px solid #6c757d;
  border-radius: 6px;
  overflow: hidden;
}

.zoom-group button {
  display: flex;
  align-items: center;
  justify-content: center;
  width: 35px;
  color: #6c757d;
}

.zoom-group svg {
  width: 17px;
  height: 17px;
}

.zoom-group .on {
  background: #6c757d;
  color: #fff;
}

.map-header input {
  flex: 1;
  padding: 0 10px;
  border-radius: 6px;
  background: #e9ecef;
}

.map-header input::placeholder {
  color: #6c757d;
  opacity: 1;
}

.world {
  display: block;
  width: 100%;
}

.land path {
  fill: #ccc;
  stroke: #555;
  stroke-width: 3;
}

.sea path {
  fill: #fff;
  stroke: #555;
  stroke-width: 3;
}

.borders path, .borders circle {
  fill: none;
  stroke: #555;
  stroke-width: 3;
}

.names {
  font-size: 39px;
  fill: #111;
}

/* meters */
.meters {
  display: grid;
  grid-template-columns: 1fr 1fr;
  gap: 11px;
}

.meter {
  position: relative;
  height: 35px;
  border-radius: 6px;
  overflow: hidden;
}

.meter-top {
  position: relative;
  height: 26px;
  background: #e9ecef;
  text-align: center;
  font-size: 13px;
  line-height: 22px;
}

.fill {
  position: absolute;
  top: 0;
  left: 0;
  height: 100%;
  background-color: #0d6efd;
}

.meter-top span {
  position: relative;
}

.meter .close {
  right: 7px;
  color: #0009;
}

.striped {
  background-image: linear-gradient(45deg, #ffffff26 25%, transparent 25%, transparent 50%, #ffffff26 50%, #ffffff26 75%, transparent 75%);
  background-size: 16px 16px;
}

.scale {
  display: flex;
  height: 9px;
}

.green { background-color: #198754; }
.yellow { background-color: #ffc107; }
.red { background-color: #dc3545; }

.meter.freq {
  border: 1px solid #e1e4e5;
  background: #f8f9fa;
  color: #000;
  font-size: 18px;
  line-height: 35px;
  text-align: center;
}

/* waterfall */
.fall-header, .fall-footer {
  display: flex;
  justify-content: center;
  background: #f7f7f7;
}

.fall-header {
  padding: 10px 0;
  border-bottom: 1px solid #d3d5d6;
}

.tabs {
  border-color: #eceeef;
  border-radius: 8px;
  height: 30px;
}

.tabs button {
  display: flex;
  align-items: center;
  justify-content: center;
  width: 56px;
  background: #fafbfb;
  color: #495057;
  border-right: 1px solid #eceeef;
}

.tabs svg {
  width: 19px;
  height: 19px;
}

.tabs .on {
  background: #495057;
  color: #fff;
}

.fall-body {
  padding: 9px;
}

canvas {
  display: block;
  width: 100%;
}

.fall-footer {
  padding: 9px 0;
  border-top: 1px solid #d3d5d6;
}

.slots {
  border-color: #a0a6aa;
}

.slots button {
  height: 34px;
  padding: 0 4px;
  color: #a0a6aa;
  border-right: 1px solid #a0a6aa;
}

.slots button:last-child {
  border-right: none;
}

.slots .on {
  background: #ffd454;
  color: #6b5c2c;
}

/* broadcasts */
.cast-body {
  display: flex;
  flex-direction: column;
  gap: 10px;
  padding: 9px 14px;
}

.ping {
  display: flex;
  height: 67px;
}

.ping-field {
  flex: 1;
  display: flex;
  flex-direction: column;
  padding: 8px 13px;
  border: 1px solid #dee2e6;
  border-radius: 6px 0 0 6px;
}

.ping-field label {
  font-size: 14px;
  color: #888;
}

.ping-field input {
  line-height: 22px;
}

.ping button {
  width: 119px;
  border: 1px solid #6c757d;
  border-radius: 0 6px 6px 0;
  color: #6c757d;
  font-size: 15px;
  font-weight: 700;
}

.cq {
  height: 38px;
  border: 1px solid #6c757d;
  border-radius: 6px;
}

/* bottom bar */
.bottom {
  display: grid;
  grid-template-columns: minmax(0, 1087fr) minmax(0, 550fr);
  gap: 11px;
  padding: 12px 9px 9px;
  background: #e7ebed;
  color: #fff;
}

.chips, .pair, .chip-group {
  display: flex;
}

.pair {
  gap: 4px;
}

.chip, .chip-group {
  height: 35px;
  border-radius: 6px;
  overflow: hidden;
  background: #959da2;
  line-height: 35px;
}

.chip {
  display: flex;
  align-items: center;
  justify-content: center;
  width: 35px;
}

.chip svg, .chip-group svg {
  width: 17px;
  height: 17px;
}

.chip.wide {
  width: 86px;
  margin: 0 32px 0 10px;
}

.chip-group {
  margin-right: 32px;
}

.chip-group span {
  padding: 0 10px;
}

.chip-group .dark {
  display: flex;
  align-items: center;
  background: #6c757d;
}

.chip-group .sep {
  border-left: 1px solid #6c757d;
}

.progress {
  height: 35px;
  border-radius: 6px;
  background: #6c757d;
  text-align: center;
  font-size: 14px;
  line-height: 31px;
}

/* drawer handle on the right edge */
.grid-tab {
  position: absolute;
  right: -2px;
  top: 318px;
  width: 68px;
  height: 179px;
  padding-left: 18px;
  border: 2px solid #fff;
  border-radius: 0 16px 16px 0;
  background: #6c757d;
  color: #fff;
  font-size: 17px;
  writing-mode: vertical-rl;
  transform: rotate(180deg);
  box-shadow: 0 0 8px #0004;
}

/* taskbar */
.taskbar {
  display: flex;
  justify-content: space-between;
  height: 43px;
  background: #d2e4ea;
  color: #222;
}

.apps, .tray {
  display: flex;
  align-items: center;
}

.apps button {
  display: flex;
  align-items: center;
  justify-content: center;
  width: 58px;
  height: 43px;
  color: #000;
}

.apps button:first-child {
  width: 54px;
}

.apps svg {
  width: 28px;
  height: 28px;
}

.apps .run {
  border-bottom: 1px solid #9bdcf5;
}

.apps .current {
  background: #eaf5f8;
}

.tray {
  gap: 7px;
  padding-right: 28px;
}

.tray svg {
  width: 20px;
  height: 20px;
}

.stamp {
  width: 70px;
  text-align: center;
  font-size: 13px;
  line-height: 21px;
}

.stamp.lang {
  width: 40px;
}

.notes {
  position: relative;
  margin-left: 9px;
  display: flex;
}

.notes span {
  position: absolute;
  left: 9px;
  top: 9px;
  width: 18px;
  height: 18px;
  border: 1px solid #888;
  border-radius: 50%;
  background: #d9dfe2;
  font-size: 12px;
  line-height: 16px;
  text-align: center;
}
```
FILE: waterfall.js
```js
// Draws the spectrum waterfall
const canvas = document.getElementById("waterfall");
const ctx = canvas.getContext("2d");
const w = canvas.width;
const h = canvas.height;

const stops = [
  [33, 145, 140], [34, 168, 132], [68, 191, 112],
  [122, 209, 81], [189, 223, 38], [253, 231, 37],
];

let seed = 7053;
function rnd() {
  seed = (seed * 1664525 + 1013904223) % 4294967296;
  return seed / 4294967296;
}

function color(v) {
  const p = Math.max(0, Math.min(0.999, v)) * 5;
  const i = Math.floor(p);
  return stops[i].map((c, k) => c + (stops[i + 1][k] - c) * (p - i));
}

// signal level per column
function base(x) {
  if (x < 25) return 0.31;
  if (x < 45) return 0.31 + (x - 25) * 0.01;
  if (x < 180) return 0.52;
  if (x < 300) return 0.56;
  if (x < 447) return 0.5;
  return Math.max(0.31, 0.5 - (x - 447) * 0.006);
}

const level = new Float32Array(w * h);
let drift = 0;
for (let y = 0; y < h; y++) {
  drift = drift * 0.8 + (rnd() - 0.5) * 0.05;
  const row = drift + (rnd() - 0.5) * 0.03 - (y > 210 && y < 235 ? 0.08 : 0);
  for (let x = 0; x < w; x++) {
    const i = y * w + x;
    level[i] = base(x) + row + (rnd() + rnd() - 1) * 0.17;
    if (rnd() < 0.02) level[i] -= 0.2;
    if (x > 0) level[i] = level[i] * 0.65 + level[i - 1] * 0.35;
    if (y > 0) level[i] = level[i] * 0.85 + (level[i - w] - 0) * 0.15;
  }
}

function streak(cx, cy, len, gain) {
  const slope = rnd() * -0.25;
  for (let i = 0; i < len; i++) {
    const x = Math.round(cx + i);
    const y = Math.round(cy + i * slope);
    if (x < 0 || x >= w || y < 0 || y >= h) continue;
    level[y * w + x] += gain * (1 - Math.abs(i / len - 0.5));
  }
}

for (let n = 0; n < 800; n++) {
  streak(195 + (rnd() + rnd()) * 48, rnd() * h, 6 + rnd() * 14, 0.06 + rnd() * rnd() * 0.4);
}
for (let n = 0; n < 170; n++) {
  streak(175 + rnd() * 30, rnd() * h, 5 + rnd() * 12, 0.05 + rnd() * rnd() * 0.35);
}
for (let n = 0; n < 110; n++) {
  streak(285 + rnd() * 18, 40 + rnd() * 90, 6 + rnd() * 12, 0.08 + rnd() * 0.3);
}
for (let n = 0; n < 130; n++) {
  streak(30 + rnd() * 60, rnd() * h, 8 + rnd() * 18, 0.03 + rnd() * 0.12);
}
for (let y = 212; y < 235; y++) {
  for (let x = 233; x < 264; x++) level[y * w + x] += rnd() * 0.75;
}

const img = ctx.createImageData(w, h);
for (let i = 0; i < w * h; i++) {
  const c = color(level[i]);
  img.data[i * 4] = c[0];
  img.data[i * 4 + 1] = c[1];
  img.data[i * 4 + 2] = c[2];
  img.data[i * 4 + 3] = 255;
}
ctx.putImageData(img, 0, 0);

// slot markers
ctx.fillStyle = "#bfc3bf";
[45, 106, 200, 292, 386, 446].forEach((x) => ctx.fillRect(x, 2, 3, h - 2));
```
